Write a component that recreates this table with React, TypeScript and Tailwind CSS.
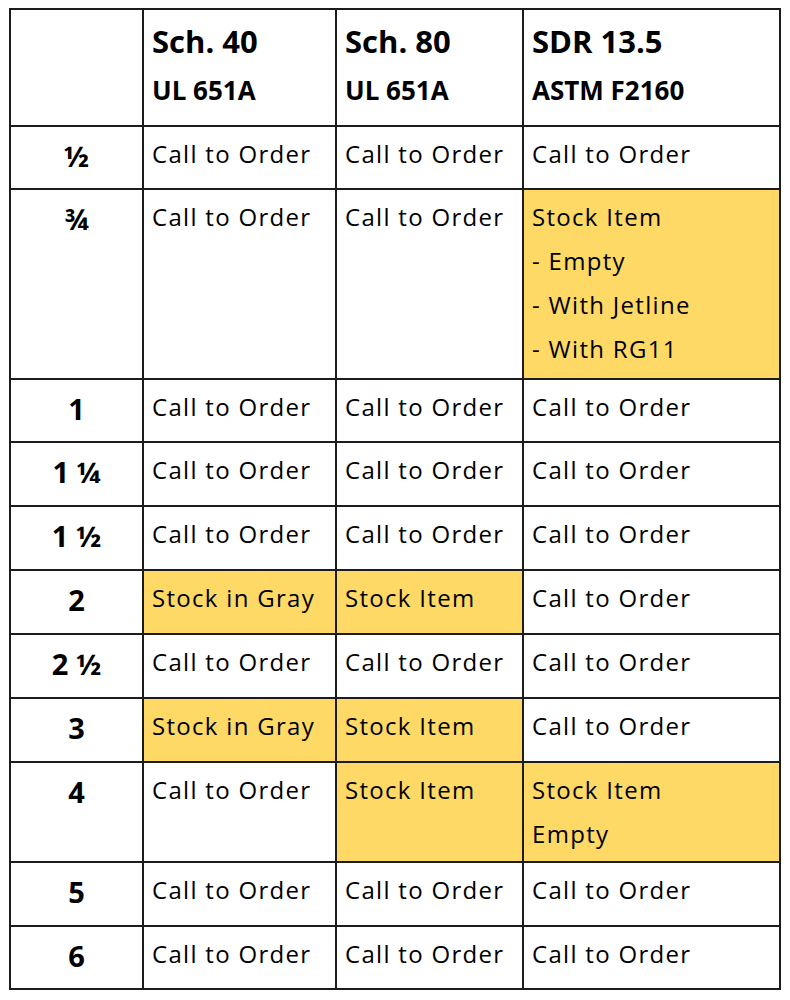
import React from "react";

type Cell = { lines: string[]; hl?: boolean };
type Row = { label: string; h: string; cells: Cell[] };

const C = (t = "Call to Order"): Cell => ({ lines: [t] });
const Y = (...l: string[]): Cell => ({ lines: l, hl: true });

const rows: Row[] = [
  { label: "½", h: "h-[63px]", cells: [C(), C(), C()] },
  { label: "¾", h: "h-[190px]", cells: [C(), C(), Y("Stock Item", "- Empty", "- With Jetline", "- With RG11")] },
  { label: "1", h: "h-[63px]", cells: [C(), C(), C()] },
  { label: "1 ¼", h: "h-[64px]", cells: [C(), C(), C()] },
  { label: "1 ½", h: "h-[64px]", cells: [C(), C(), C()] },
  { label: "2", h: "h-[64px]", cells: [Y("Stock in Gray"), Y("Stock Item"), C()] },
  { label: "2 ½", h: "h-[64px]", cells: [C(), C(), C()] },
  { label: "3", h: "h-[64px]", cells: [Y("Stock in Gray"), Y("Stock Item"), C()] },
  { label: "4", h: "h-[100px]", cells: [C(), Y("Stock Item"), Y("Stock Item", "Empty")] },
  { label: "5", h: "h-[64px]", cells: [C(), C(), C()] },
  { label: "6", h: "h-[63px]", cells: [C(), C(), C()] },
];

const headers = [
  ["Sch. 40", "UL 651A"],
  ["Sch. 80", "UL 651A"],
  ["SDR 13.5", "ASTM F2160"],
];

const font = { fontFamily: '"Open Sans", "Liberation Sans", sans-serif' };

export default function App() {
  return (
    <div className="w-[790px] h-[1000px] bg-white pt-[8px] pl-[9px]" style={font}>
      <div className="grid grid-cols-[133px_193px_187px_257px] w-[772px] border-t-2 border-l-2 border-[#1c1c1c] text-black">
        <div className="h-[117px] border-r-2 border-b-2 border-[#1c1c1c]" />
        {headers.map((h) => (
          <div key={h[0]} className="h-[117px] border-r-2 border-b-2 border-[#1c1c1c] pl-[8px] pt-[8px] flex flex-col">
            <div className="text-[31px] font-bold leading-[46px] whitespace-nowrap">{h[0]}</div>
            <div className="text-[26px] font-bold leading-[52px] whitespace-nowrap">{h[1]}</div>
          </div>
        ))}
        {rows.map((r) => (
          <React.Fragment key={r.label}>
            <div className={`${r.h} border-r-2 border-b-2 border-[#1c1c1c] flex justify-center pt-[5px]`}>
              <span className="text-[29px] font-bold leading-[48px]">{r.label}</span>
            </div>
            {r.cells.map((c, i) => (
              <div
                key={i}
                className={`${r.h} border-r-2 border-b-2 border-[#1c1c1c] pl-[8px] pt-[5px] ${c.hl ? "bg-[#ffd966]" : "bg-white"}`}
              >
                {c.lines.map((l, j) => (
                  <div key={j} className="text-[24px] leading-[44px] tracking-[1.3px] whitespace-nowrap">
                    {l}
                  </div>
                ))}
              </div>
            ))}
          </React.Fragment>
        ))}
      </div>
    </div>
  );
}
